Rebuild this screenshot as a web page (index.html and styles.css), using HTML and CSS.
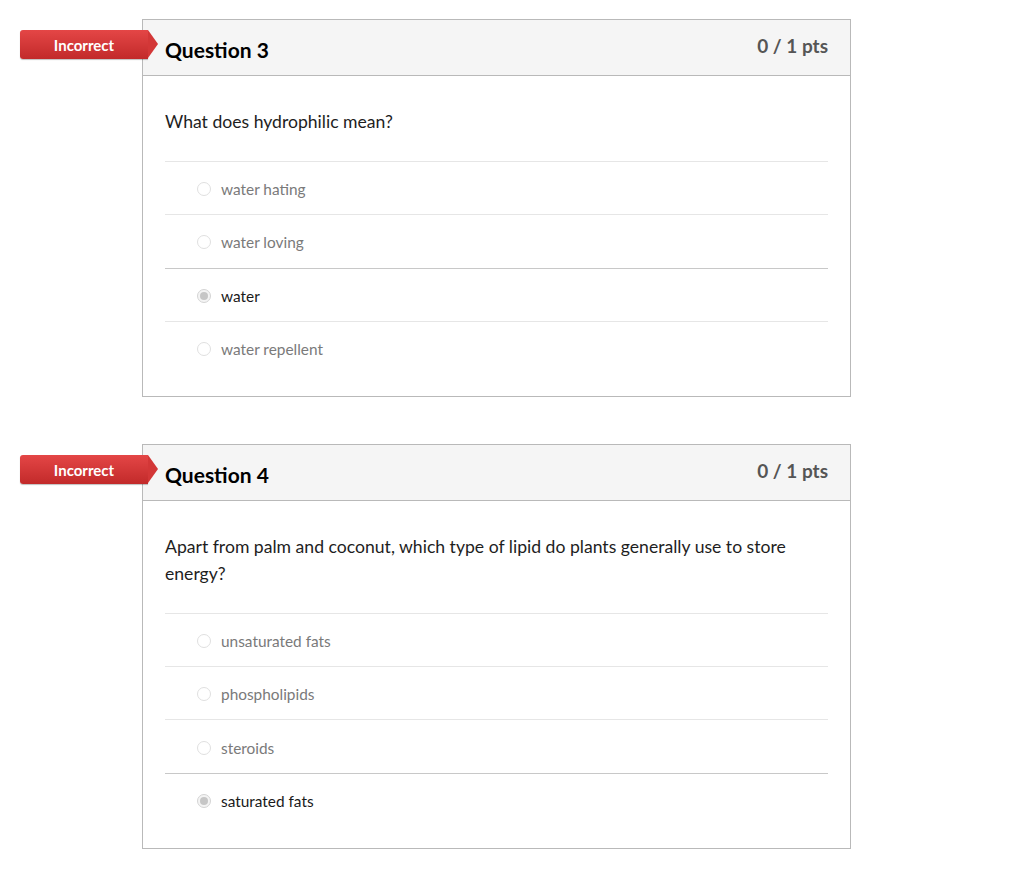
FILE: index.html
```html
<!DOCTYPE html>
<html>
<head>
<meta charset="utf-8">
<link rel="stylesheet" href="styles.css">
</head>
<body>
<div class="quiz">
  <div class="question">
    <div class="badge">Incorrect</div>
    <div class="header">
      <h2 class="title">Question 3</h2>
      <span class="pts">0 / 1 pts</span>
    </div>
    <div class="body">
      <p class="text">What does hydrophilic mean?</p>
      <div class="answers">
        <div class="answer"><span class="radio"></span><span class="label">water hating</span></div>
        <div class="answer"><span class="radio"></span><span class="label">water loving</span></div>
        <div class="answer selected"><span class="radio"></span><span class="label">water</span></div>
        <div class="answer"><span class="radio"></span><span class="label">water repellent</span></div>
      </div>
    </div>
  </div>
  <div class="question">
    <div class="badge">Incorrect</div>
    <div class="header">
      <h2 class="title">Question 4</h2>
      <span class="pts">0 / 1 pts</span>
    </div>
    <div class="body">
      <p class="text">Apart from palm and coconut, which type of lipid do plants generally use to store energy?</p>
      <div class="answers">
        <div class="answer"><span class="radio"></span><span class="label">unsaturated fats</span></div>
        <div class="answer"><span class="radio"></span><span class="label">phospholipids</span></div>
        <div class="answer"><span class="radio"></span><span class="label">steroids</span></div>
        <div class="answer selected"><span class="radio"></span><span class="label">saturated fats</span></div>
      </div>
    </div>
  </div>
</div>
</body>
</html>
```
FILE: styles.css
```css
html, body {
  margin: 0;
  padding: 0;
  background: #fff;
}
body {
  font-family: Lato, "Open Sans", "Liberation Sans", sans-serif;
  color: #2d2d2d;
}
.quiz {
  padding: 19px 0 0 142px;
  display: flex;
  flex-direction: column;
  gap: 47px;
}
.question {
  position: relative;
  width: 707px;
  border: 1px solid #b9b9b9;
}
.badge {
  position: absolute;
  left: -123px;
  top: 10px;
  width: 128px;
  height: 29px;
  box-sizing: border-box;
  padding-top: 2px;
  background: linear-gradient(#e44646, #c22a2a);
  border-radius: 3px 0 0 3px;
  color: #fff;
  font-size: 15px;
  font-weight: 700;
  line-height: 27px;
  text-align: center;
  box-shadow: 0 1px 1px rgba(0,0,0,0.25);
}
.badge::after {
  content: "";
  position: absolute;
  right: -10px;
  top: 0;
  width: 0;
  height: 0;
  border-top: 14.5px solid transparent;
  border-bottom: 14.5px solid transparent;
  border-left: 10px solid #d33737;
}
.header {
  background: #f5f5f5;
  border-bottom: 1px solid #b9b9b9;
  height: 55px;
  padding: 0 22px;
  display: flex;
  justify-content: space-between;
  align-items: flex-start;
}
.title {
  margin: 17px 0 0 0;
  font-size: 21px;
  font-weight: 700;
  line-height: 26px;
  color: #000;
}
.pts {
  margin-top: 14px;
  font-size: 19px;
  font-weight: 700;
  line-height: 24px;
  color: #555;
}
.body {
  padding: 33px 22px 22px;
}
.text {
  margin: 0 0 25.5px 0;
  font-size: 17.6px;
  line-height: 26.5px;
  color: #1e1e1e;
}
.answers {
  display: flex;
  flex-direction: column;
}
.answer {
  height: 53.33px;
  box-sizing: border-box;
  border-top: 1px solid #e6e6e6;
  padding-top: 2px;
  display: flex;
  align-items: center;
  padding-left: 32px;
  gap: 10px;
  font-size: 15.4px;
  color: #7a7a7a;
}
.answer.selected {
  border-top-color: #c8c8c8;
  color: #1a1a1a;
}
.radio {
  width: 14px;
  height: 14px;
  border-radius: 50%;
  border: 1px solid #e0e0e0;
  background: #fff;
  box-sizing: border-box;
  position: relative;
  flex: none;
}
.answer.selected .radio {
  border-color: #d4d4d4;
  background: #f4f4f4;
}
.answer.selected .radio::after {
  content: "";
  position: absolute;
  left: 2px;
  top: 2px;
  width: 8px;
  height: 8px;
  border-radius: 50%;
  background: #c6c6c6;
}
.label {
  line-height: 20px;
}
```
